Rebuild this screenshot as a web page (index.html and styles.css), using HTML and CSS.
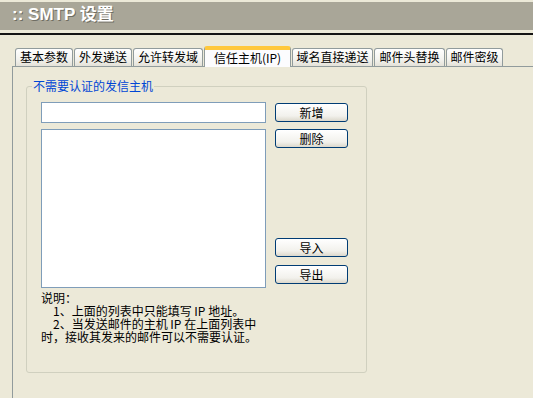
FILE: index.html
```html
<!DOCTYPE html>
<html lang="zh-CN">
<head>
    <meta charset="UTF-8">
    <title>SMTP 设置</title>
    <link rel="stylesheet" href="styles.css">
</head>
<body>
    <div class="title-bar">:: SMTP 设置</div>
    <div class="title-rule"></div>

    <div class="tabs">
        <div class="tab tab-w58">基本参数</div>
        <div class="tab tab-w58">外发递送</div>
        <div class="tab tab-w70">允许转发域</div>
        <div class="tab active">信任主机(IP)</div>
        <div class="tab tab-w81">域名直接递送</div>
        <div class="tab tab-w71">邮件头替换</div>
        <div class="tab tab-w57">邮件密级</div>
    </div>

    <div class="panel">
        <div class="group">
            <span class="legend">不需要认证的发信主机</span>
            <div class="grid">
                <input class="host-input" type="text">
                <button class="btn btn-first">新增</button>
                <div class="host-list"></div>
                <div class="btn-col">
                    <button class="btn">删除</button>
                    <button class="btn btn-push">导入</button>
                    <button class="btn">导出</button>
                </div>
            </div>
            <div class="notes">
                <div>说明：</div>
                <div class="indent">1、上面的列表中只能填写 IP 地址。</div>
                <div class="indent">2、当发送邮件的主机 IP 在上面列表中</div>
                <div>时，接收其发来的邮件可以不需要认证。</div>
            </div>
        </div>
    </div>
</body>
</html>
```

FILE: styles.css
```css
body {
    margin: 0;
    background-color: #ECE9D8;
    color: #000;
    font-family: "Noto Sans CJK SC", "Liberation Sans", sans-serif;
    font-size: 12px;
    overflow: hidden;
}
.title-bar {
    margin-top: 2px;
    height: 28px;
    line-height: 26px;
    padding-left: 12px;
    background-color: #A9A698;
    color: #fff;
    font-family: "Liberation Sans", "Noto Sans CJK SC", sans-serif;
    font-size: 17px;
    font-weight: bold;
    text-shadow: 1px 1px 0 #6f6d63;
}
.title-rule {
    margin-top: 3px;
    height: 2px;
    background-color: #141414;
}
.tabs {
    display: flex;
    align-items: flex-end;
    gap: 1px;
    margin: 11px 0 0 15px;
}
.tab {
    box-sizing: border-box;
    height: 18px;
    line-height: 16px;
    text-align: center;
    border: 1px solid #919B9C;
    border-bottom: none;
    border-radius: 3px 3px 0 0;
    background: linear-gradient(#ffffff, #f3f3ef 60%, #e4e2d8);
    white-space: nowrap;
}
.tab-w58 { width: 58px; }
.tab-w70 { width: 70px; }
.tab-w81 { width: 81px; }
.tab-w71 { width: 71px; }
.tab-w57 { width: 57px; }
.tab.active {
    position: relative;
    z-index: 1;
    width: 87px;
    height: 21px;
    line-height: 18px;
    margin-bottom: -1px;
    background: #FCFCFE;
    border-top: 3px solid #FFC83C;
    box-shadow: inset 0 1px 0 #FFC83C;
}
.panel {
    margin-left: 12px;
    height: calc(100vh - 66px);
    border-top: 1px solid #919B9C;
    border-left: 1px solid #919B9C;
}
.group {
    box-sizing: border-box;
    width: 341px;
    height: 287px;
    margin: 19px 0 0 13px;
    padding-left: 14px;
    border: 1px solid #D0D0BF;
    border-radius: 3px;
}
.legend {
    display: table;
    margin: -8px 0 0 -9px;
    padding: 0 1px;
    line-height: 14px;
    color: #0046D5;
    background-color: #ECE9D8;
}
.grid {
    display: grid;
    grid-template-columns: 225px 73px;
    column-gap: 9px;
    row-gap: 6px;
    margin-top: 9px;
}
.host-input {
    box-sizing: border-box;
    height: 21px;
    margin: 0;
    border: 1px solid #7F9DB9;
    background: #fff;
}
.host-list {
    box-sizing: border-box;
    height: 159px;
    border: 1px solid #7F9DB9;
    background: #fff;
}
.btn {
    box-sizing: border-box;
    width: 73px;
    height: 19px;
    padding: 0;
    border: 1px solid #003C74;
    border-radius: 3px;
    background: linear-gradient(#ffffff, #f2f1ec 70%, #dcd8cc);
    color: #000;
    font-family: inherit;
    font-size: 12px;
    line-height: 16px;
}
.btn-first {
    margin-top: 1px;
}
.btn-col {
    display: flex;
    flex-direction: column;
    gap: 8px;
    padding-bottom: 4px;
}
.btn-push {
    margin-top: auto;
}
.notes {
    margin-top: 3px;
    line-height: 13px;
    white-space: nowrap;
}
.indent {
    padding-left: 12px;
}
```
